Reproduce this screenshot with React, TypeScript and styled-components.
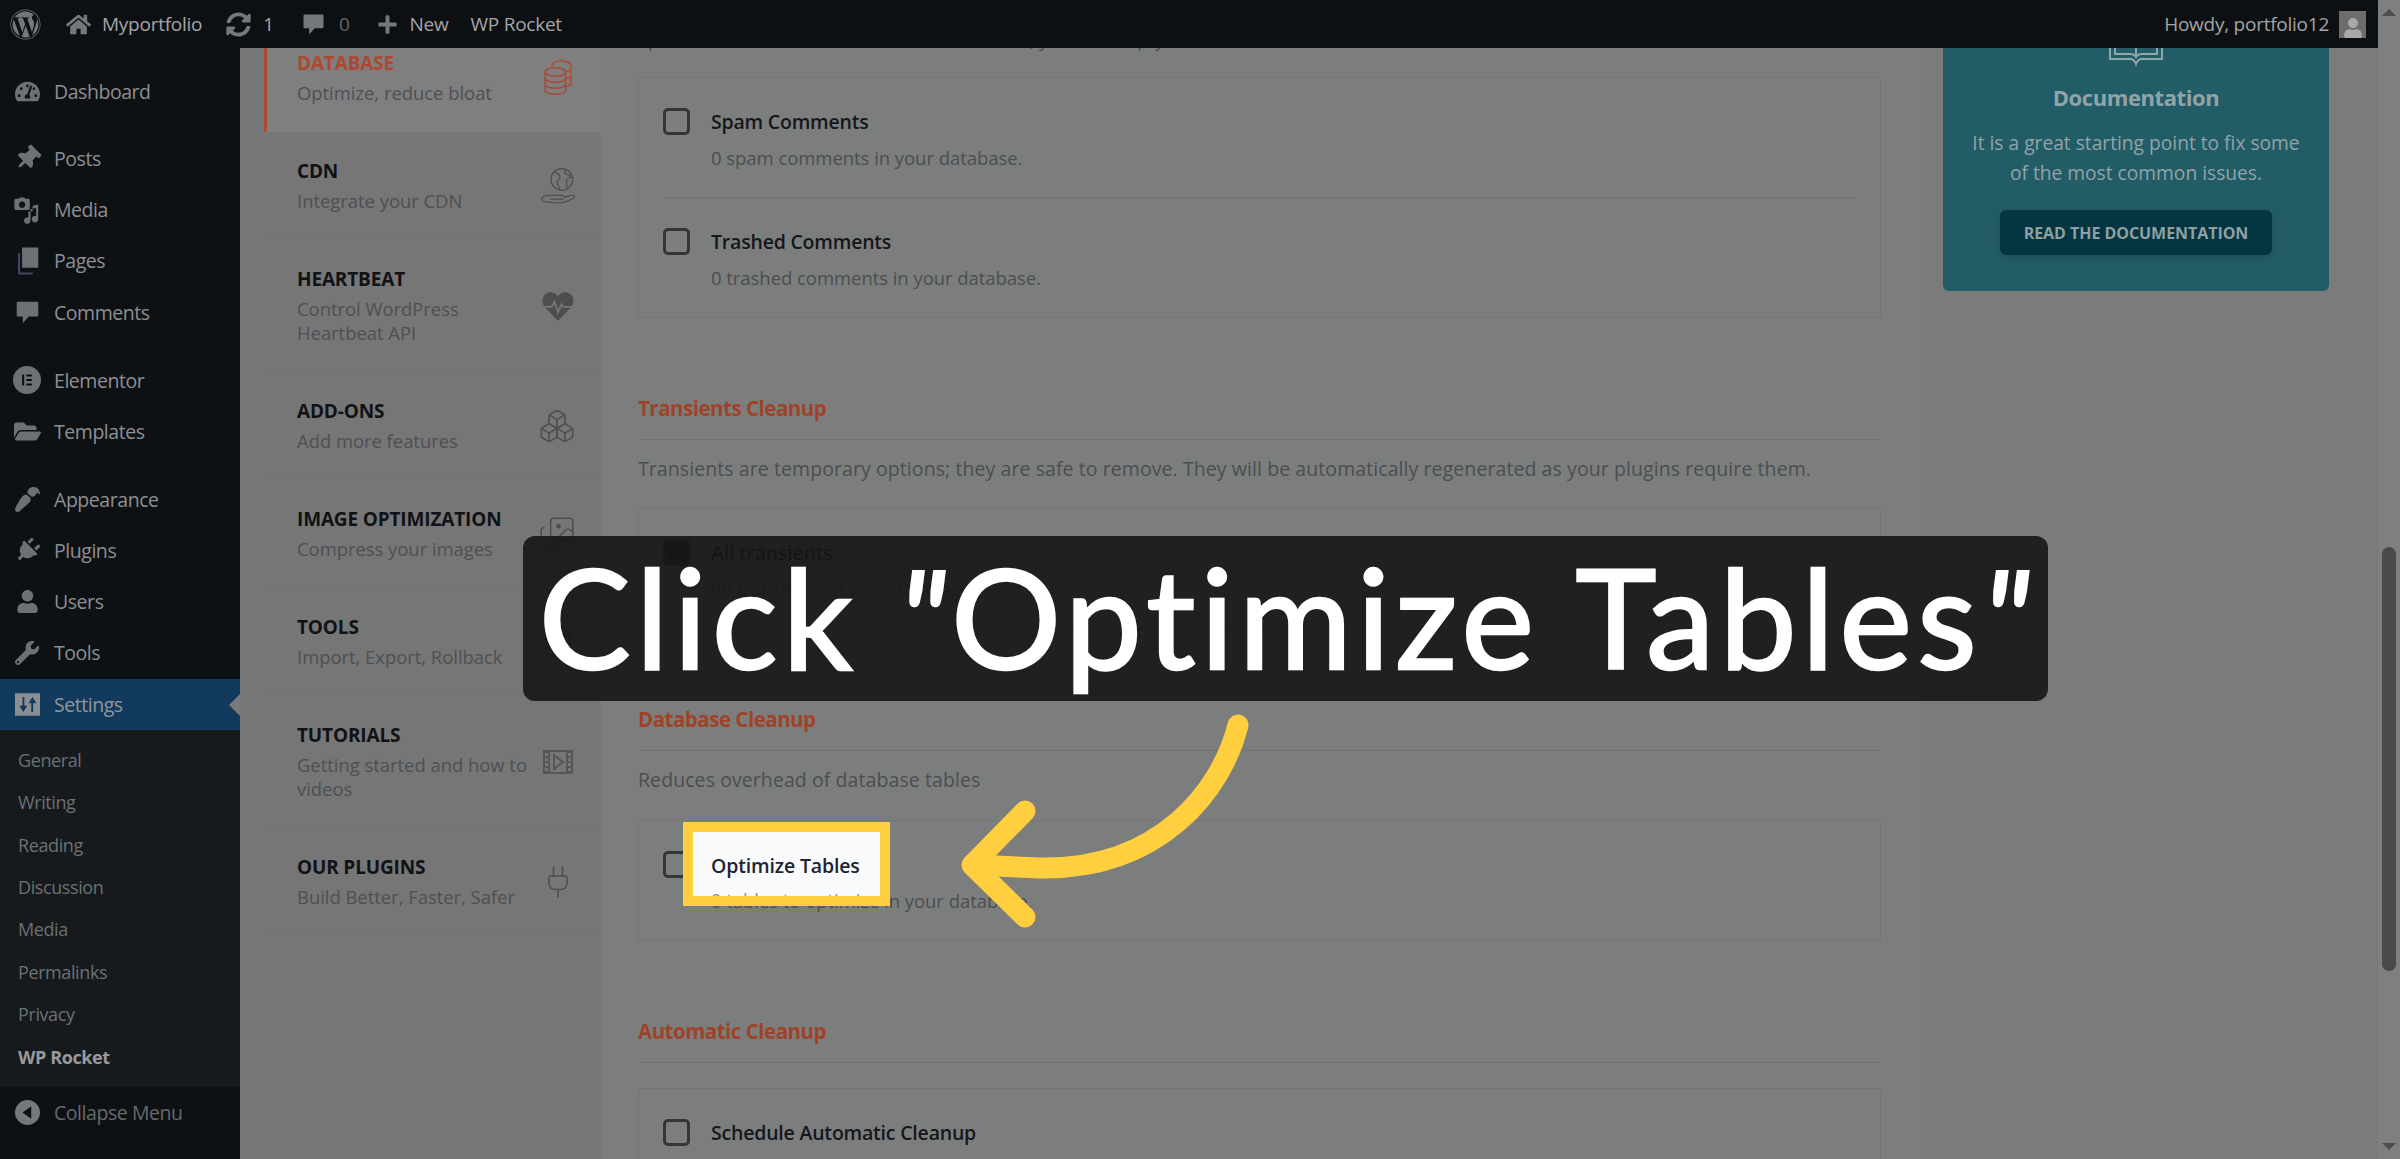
import React from "react";
import styled, { createGlobalStyle } from "styled-components";
import { FaWordpress, FaHome, FaSyncAlt, FaPlus, FaTachometerAlt, FaThumbtack, FaFolderOpen, FaPaintBrush, FaPlug, FaUser, FaWrench } from "react-icons/fa";
import { Boxes, Images, FileCog, Plug } from "lucide-react";

const Global = createGlobalStyle`
  html, body { margin: 0; padding: 0; width: 2400px; height: 1159px; overflow: hidden; background: #7b7b7b; }
  * { box-sizing: border-box; }
  body { font-family: "Open Sans", "Noto Sans", sans-serif; }
`;

const Root = styled.div`
  position: relative; width: 2400px; height: 1159px; display: flex; overflow: hidden;
`;
const PageColumn = styled.div`
  width: 2378px; height: 1159px; display: flex; flex-direction: column; overflow: hidden;
`;
const TopBar = styled.header`
  position: relative; z-index: 2; flex: 0 0 48px; background: #0d1013; display: flex; align-items: center;
  color: #a3a5a7; font-size: 19px; letter-spacing: -0.25px; padding-left: 10px;
`;
const BarItem = styled.span<{ $left: number; $dim?: boolean }>`
  display: inline-flex; align-items: center; margin-left: ${(p) => p.$left}px; color: ${(p) => (p.$dim ? "#62666a" : "#a3a5a7")};
  svg { display: block; color: #74787c; }
`;
const BarRight = styled.div`
  margin-left: auto; margin-right: 12px; display: flex; align-items: center; gap: 10px;
`;
const Avatar = styled.span`
  width: 27px; height: 27px; background: #6d6d6d; display: flex; align-items: flex-end; justify-content: center; overflow: hidden;
  svg { color: #a9a9a9; }
`;
const Body = styled.div`
  flex: 1; display: flex; min-height: 0; overflow: hidden;
`;
const Sidebar = styled.nav`
  flex: 0 0 240px; background: #0e1114; padding-top: 18px; display: flex; flex-direction: column;
`;
const MenuItem = styled.div<{ $gap?: number; $active?: boolean }>`
  height: 51.15px; flex: none; display: flex; align-items: center; position: relative; margin-top: ${(p) => p.$gap ?? 0}px;
  background: ${(p) => (p.$active ? "#123a5c" : "transparent")};
  color: #8d8f93; font-size: 19.5px; letter-spacing: -0.45px;
  ${(p) => p.$active && `
    color: #90959a;
    &::after { content: ""; position: absolute; right: 0; top: 15px; border: 11px solid transparent; border-right-color: #7a7a7a; border-left: 0; }
  `}
`;
const MenuIcon = styled.span<{ $turn?: number }>`
  flex: 0 0 54px; display: flex; align-items: center; justify-content: center; color: #6e7174;
  svg { display: block; transform: rotate(${(p) => p.$turn ?? 0}deg); }
`;
const Submenu = styled.div`
  background: #161a1d; padding: 9px 0 9px 18px; height: 357px; flex: none;
`;
const SubItem = styled.div<{ $strong?: boolean }>`
  height: 42.4px; display: flex; align-items: center; font-size: 18px; letter-spacing: -0.4px;
  color: ${(p) => (p.$strong ? "#979a9c" : "#6c7073")}; font-weight: ${(p) => (p.$strong ? 700 : 400)};
`;
const Collapse = styled(MenuItem)`
  color: #66696c; margin-top: 0;
`;
const RocketNav = styled.aside`
  flex: 0 0 361px; background: #787878; padding-left: 24px; margin-top: -24px; display: flex; flex-direction: column;
`;
const NavEntry = styled.div<{ $active?: boolean; $tall?: boolean }>`
  flex: none; height: ${(p) => (p.$tall ? 132 : 108)}px; display: flex; align-items: center; padding: 0 25px 0 ${(p) => (p.$active ? 30 : 33)}px;
  background: ${(p) => (p.$active ? "#7f7f7f" : "#767676")};
  border-left: ${(p) => (p.$active ? "3px solid #ad4930" : "0")};
  border-bottom: 1px solid ${(p) => (p.$active ? "transparent" : "#727272")};
  gap: 6px;
`;
const NavText = styled.div`
  flex: 1; min-width: 0; margin-top: -3px;
`;
const NavTitle = styled.div<{ $active?: boolean }>`
  font-size: 19px; font-weight: 700; line-height: 30px; margin-bottom: 3px; letter-spacing: -0.15px; color: ${(p) => (p.$active ? "#ad4930" : "#101216")};
`;
const NavDesc = styled.div`
  font-size: 18.4px; line-height: 24px; letter-spacing: 0; color: #4d5054; white-space: pre-line;
`;
const NavIcon = styled.span<{ $active?: boolean }>`
  flex: 0 0 36px; display: flex; justify-content: center; color: ${(p) => (p.$active ? "#ad4930" : "#4c4e50")};
  svg { display: block; }
`;
const Content = styled.main`
  flex: 0 0 1318px; background: #7c7e7d; padding: 0 38px 0 37px; margin-top: -20px;
`;
const Lead = styled.p`
  margin: 0; font-size: 18.5px; line-height: 24px; letter-spacing: -0.1px; color: #4b4e50; white-space: nowrap;
`;
const Heading = styled.h3<{ $top: number }>`
  margin: ${(p) => p.$top}px 0 0; font-size: 20.5px; font-weight: 700; line-height: 30px; letter-spacing: -0.5px; color: #9e4329;
  padding-bottom: 16px; border-bottom: 1px solid #717372;
`;
const SectionDesc = styled.p`
  margin: 17px 0 0; font-size: 19.5px; line-height: 24px; letter-spacing: 0.08px; color: #4b4e50;
`;
const Card = styled.section<{ $top: number }>`
  margin-top: ${(p) => p.$top}px; border: 1px solid #747675; border-radius: 2px; padding: 0 24px;
`;
const Row = styled.div<{ $line?: boolean }>`
  display: flex; gap: 21px; padding: 30px 0 27px; border-bottom: ${(p) => (p.$line ? "1px solid #6f7170" : "0")};
`;
const Box = styled.span<{ $checked?: boolean }>`
  flex: 0 0 27px; width: 27px; height: 27px; border: 3px solid #333536; border-radius: 5px;
  background: ${(p) => (p.$checked ? "#20233a" : "transparent")}; display: flex; align-items: center; justify-content: center;
  svg { display: block; }
`;
const RowTitle = styled.div`
  font-size: 19.5px; font-weight: 600; line-height: 28px; letter-spacing: -0.2px; color: #14171b;
`;
const RowDesc = styled.div`
  margin-top: 10px; font-size: 18.5px; line-height: 24px; letter-spacing: -0.05px; color: #4b4e50;
`;
const RightPanel = styled.aside`
  flex: 1; background: #7b7b7b; padding-left: 24px;
`;
const Help = styled.div`
  width: 386px; height: 283px; margin-top: -40px; background: #225c66; border-radius: 6px; display: flex; flex-direction: column; align-items: center; padding-top: 17px; color: #91a4a7;
`;
const HelpTitle = styled.div`
  margin-top: 14px; font-size: 22px; line-height: 32px; font-weight: 700; letter-spacing: -0.4px;
`;
const HelpText = styled.div`
  margin-top: 15px; font-size: 19.2px; line-height: 30px; text-align: center; letter-spacing: 0; font-weight: 500;
`;
const HelpButton = styled.div`
  margin-top: 22px; width: 272px; height: 45px; border-radius: 6px; background: #033641; display: flex; align-items: center; justify-content: center;
  font-size: 16px; font-weight: 700; letter-spacing: -0.05px; box-shadow: 0 3px 8px rgba(0,0,0,.12); color: #8fa0a3;
`;
const Scrollbar = styled.div`
  flex: 0 0 22px; background: #7f7f7f; display: flex; flex-direction: column; align-items: center; padding: 9px 0 9px;
`;
const ArrowUp = styled.span`
  width: 0; height: 0; border: 7px solid transparent; border-bottom: 7px solid #4d4d4d; border-top: 0;
`;
const ArrowDown = styled(ArrowUp)`
  margin-top: auto; border-bottom: 0; border-top: 7px solid #4d4d4d;
`;
const Thumb = styled.span`
  margin-top: 531px; width: 14px; height: 424px; border-radius: 7px; background: #4a4a4a;
`;
const Banner = styled.div`
  position: absolute; z-index: 5; left: 523px; top: 536px; width: 1525px; height: 165px; border-radius: 12px; padding: 0 0 5px 3px;
  background: rgba(22,22,22,.9); color: #fff; display: flex; align-items: center; justify-content: center;
  font-family: Lato, "Open Sans", sans-serif; font-size: 137px; line-height: 1; letter-spacing: 5.4px; white-space: pre; -webkit-text-stroke: 2.5px #fff;
`;
const Quote = styled.span`
  font-style: italic;
`;
const Highlight = styled.div`
  position: absolute; z-index: 6; left: 683px; top: 822px; width: 207px; height: 84px; border: 10px solid #ffcf3f; background: #f9fafc; overflow: hidden; padding: 20px 0 0 18px;
`;
const HighTitle = styled.div`
  font-size: 19.5px; font-weight: 600; line-height: 28px; letter-spacing: -0.15px; color: #1b2430; white-space: nowrap;
`;
const HighDesc = styled.div`
  margin-top: 8px; font-size: 18.5px; line-height: 24px; letter-spacing: -0.05px; color: #8b8f94; white-space: nowrap;
`;
const ArrowArt = styled.svg`
  position: absolute; z-index: 7; left: 950px; top: 700px;
`;

const Bubble = ({ s }: { s: number }) => (
  <svg width={s} height={s} viewBox="0 0 20 20" fill="currentColor"><path d="M3 2h14a1 1 0 011 1v9a1 1 0 01-1 1h-6l-4.500 5v-5H3a1 1 0 01-1-1V3a1 1 0 011-1z" /></svg>
);
const MediaIcon = () => (
  <svg width="28" height="28" viewBox="0 0 20 20" fill="currentColor"><path fillRule="evenodd" d="M2 2h2l1-1h3l1 1h2a1 1 0 011 1v6a1 1 0 01-1 1H2a1 1 0 01-1-1V3a1 1 0 011-1zm4.500 2a2.200 2.200 0 100 4.400 2.200 2.200 0 000-4.400z" /><path d="M18 6v10.500a2.300 2.300 0 11-1.500-2.100V8.500l-4 1v8a2.300 2.300 0 11-1.500-2.100V11h3V7z" /></svg>
);
const PagesIcon = () => (
  <svg width="27" height="30" viewBox="0 0 20 22" fill="currentColor"><path d="M6 1h12v15H6z" /><path d="M3 5h1.500v14.500H14V21H3z" fill="#55507a" opacity=".8" /></svg>
);
const ElementorIcon = () => (
  <svg width="28" height="28" viewBox="0 0 20 20"><path fill="currentColor" fillRule="evenodd" d="M10 0a10 10 0 100 20 10 10 0 000-20zM6.500 6h1.500v8H6.500zM9.500 6h4v1.500h-4zM9.500 9.200h4v1.500h-4zM9.500 12.500h4V14h-4z" /></svg>
);
const SettingsIcon = () => (
  <svg width="25" height="25" viewBox="0 0 20 20"><path fill="#8a8f94" fillRule="evenodd" d="M0 1h20v18H0zM6 4v7H3.500l3.200 5 3.200-5H7.500V4zM13 16v-7h-2.200l3.200-5 3.200 5H14.500v7z" /></svg>
);
const CollapseIcon = () => (
  <svg width="25" height="25" viewBox="0 0 20 20"><path fill="#75797c" fillRule="evenodd" d="M10 0a10 10 0 100 20 10 10 0 000-20zM13 5v10L6 10z" /></svg>
);
const StackIcon = () => (
  <svg width="30" height="36" viewBox="0 0 32 42" fill="none" stroke="currentColor" strokeWidth="1.700">
    <ellipse cx="13" cy="14" rx="12" ry="5" />
    <path d="M1 14v21c0 3 5.500 5 12 5s12-2 12-5V14M1 21c0 3 5.500 5 12 5s12-2 12-5M1 28c0 3 5.500 5 12 5s12-2 12-5" />
    <path d="M9 7c0-3 4-6 10-6s12 2 12 5v21c0 2-2.500 3.500-6 4M25 13c3 0 6-1 6-3M25 21c3 0 6-1 6-3" />
  </svg>
);
const CdnIcon = () => (
  <svg width="34" height="38" viewBox="0 0 36 40" fill="none" stroke="currentColor" strokeWidth="1.300">
    <circle cx="22" cy="13" r="11.500" />
    <path d="M14 5c3 1 6 3 6 6s-4 2-3 6 3 5 3 7M26 3c-2 3 0 5 3 5l3 3c-3 0-5 1-5 4s1 4 0 7" />
    <path d="M1 34c0-3 5-4 9-4h12c2 0 3 1 3 2 4-1 8-3 10-2 1 1 0 3-3 4-5 3-10 4-15 4-4 0-7-1-10-1-3 0-6-1-6-3zM10 34h14" />
  </svg>
);
const HeartIcon = () => (
  <svg width="36" height="32" viewBox="0 0 36 36"><path fill="currentColor" d="M18 35L3 19C-1 14 0 5 7 3c4-1 8 0 11 4 3-4 7-5 11-4 7 2 8 11 4 16z" /><path fill="none" stroke="#767676" strokeWidth="2" d="M1 19h10l3-6 4 12 4-9 2 3h11" /></svg>
);
const FilmIcon = () => (
  <svg width="30" height="24" viewBox="0 0 30 24"><path fill="#555759" d="M0 0h30v24H0z" /><path fill="#767676" d="M7 2h16v20H7zM2 3h3v3H2zM2 8h3v3H2zM2 13h3v3H2zM2 18h3v3H2zM25 3h3v3h-3zM25 8h3v3h-3zM25 13h3v3h-3zM25 18h3v3h-3z" /><path fill="none" stroke="#555759" strokeWidth="2" d="M11 5l9 7-9 7z" /></svg>
);
const BookIcon = () => (
  <svg width="56" height="42" viewBox="0 0 56 42" fill="none" stroke="#91a4a7" strokeWidth="2"><path d="M2 4v30h20c3 0 5 2 6 5 1-3 3-5 6-5h20V4M7 2v27h15c3 0 5 1 6 3 1-2 3-3 6-3h15V2M28 4v28" /></svg>
);

const nav = [
  { t: "DATABASE", d: "Optimize, reduce bloat", i: <StackIcon />, active: true },
  { t: "CDN", d: "Integrate your CDN", i: <CdnIcon /> },
  { t: "HEARTBEAT", d: "Control WordPress\nHeartbeat API", i: <HeartIcon />, tall: true },
  { t: "ADD-ONS", d: "Add more features", i: <Boxes size={38} strokeWidth={1} /> },
  { t: "IMAGE OPTIMIZATION", d: "Compress your images", i: <Images size={38} strokeWidth={1} /> },
  { t: "TOOLS", d: "Import, Export, Rollback", i: <FileCog size={36} strokeWidth={1} /> },
  { t: "TUTORIALS", d: "Getting started and how to\nvideos", i: <FilmIcon />, tall: true },
  { t: "OUR PLUGINS", d: "Build Better, Faster, Safer", i: <Plug size={36} strokeWidth={1} /> },
];
const subs = ["General", "Writing", "Reading", "Discussion", "Media", "Permalinks", "Privacy"];

const Option = ({ title, desc, line, checked }: { title: string; desc: string; line?: boolean; checked?: boolean }) => (
  <Row $line={line}>
    <Box $checked={checked}>
      {checked && <svg width="18" height="18" viewBox="0 0 18 18" fill="none" stroke="#141414" strokeWidth="2.500"><path d="M3 10l4 4 8-11" /></svg>}
    </Box>
    <div>
      <RowTitle>{title}</RowTitle>
      <RowDesc>{desc}</RowDesc>
    </div>
  </Row>
);

export default function App() {
  return (
    <Root>
      <Global />
      <PageColumn>
        <TopBar>
          <BarItem $left={0}><FaWordpress size={31} /></BarItem>
          <BarItem $left={25}><FaHome size={25} /></BarItem>
          <BarItem $left={11}>Myportfolio</BarItem>
          <BarItem $left={24}><FaSyncAlt size={25} /></BarItem>
          <BarItem $left={12}>1</BarItem>
          <BarItem $left={27}><Bubble s={25} /></BarItem>
          <BarItem $left={13} $dim>0</BarItem>
          <BarItem $left={27}><FaPlus size={21} /></BarItem>
          <BarItem $left={12}>New</BarItem>
          <BarItem $left={22}>WP Rocket</BarItem>
          <BarRight>
            <span>Howdy, portfolio12</span>
            <Avatar><FaUser size={20} /></Avatar>
          </BarRight>
        </TopBar>
        <Body>
          <Sidebar>
            <MenuItem><MenuIcon><FaTachometerAlt size={25} /></MenuIcon>Dashboard</MenuItem>
            <MenuItem $gap={16}><MenuIcon $turn={45}><FaThumbtack size={25} /></MenuIcon>Posts</MenuItem>
            <MenuItem><MenuIcon><MediaIcon /></MenuIcon>Media</MenuItem>
            <MenuItem><MenuIcon><PagesIcon /></MenuIcon>Pages</MenuItem>
            <MenuItem><MenuIcon><Bubble s={27} /></MenuIcon>Comments</MenuItem>
            <MenuItem $gap={17}><MenuIcon><ElementorIcon /></MenuIcon>Elementor</MenuItem>
            <MenuItem><MenuIcon><FaFolderOpen size={27} /></MenuIcon>Templates</MenuItem>
            <MenuItem $gap={17}><MenuIcon $turn={180}><FaPaintBrush size={25} /></MenuIcon>Appearance</MenuItem>
            <MenuItem><MenuIcon $turn={45}><FaPlug size={25} /></MenuIcon>Plugins</MenuItem>
            <MenuItem><MenuIcon><FaUser size={23} /></MenuIcon>Users</MenuItem>
            <MenuItem><MenuIcon><FaWrench size={24} /></MenuIcon>Tools</MenuItem>
            <MenuItem $active><MenuIcon><SettingsIcon /></MenuIcon>Settings</MenuItem>
            <Submenu>
              {subs.map((s) => <SubItem key={s}>{s}</SubItem>)}
              <SubItem $strong>WP Rocket</SubItem>
            </Submenu>
            <Collapse><MenuIcon><CollapseIcon /></MenuIcon>Collapse Menu</Collapse>
          </Sidebar>
          <RocketNav>
            {nav.map((n) => (
              <NavEntry key={n.t} $active={n.active} $tall={n.tall}>
                <NavText>
                  <NavTitle $active={n.active}>{n.t}</NavTitle>
                  <NavDesc>{n.d}</NavDesc>
                </NavText>
                <NavIcon $active={n.active}>{n.i}</NavIcon>
              </NavEntry>
            ))}
          </RocketNav>
          <Content>
            <Lead>Spam and trashed comments will be removed, you can empty them.</Lead>
            <Card $top={25}>
              <Option title="Spam Comments" desc="0 spam comments in your database." line />
              <Option title="Trashed Comments" desc="0 trashed comments in your database." />
            </Card>
            <Heading $top={75}>Transients Cleanup</Heading>
            <SectionDesc>Transients are temporary options; they are safe to remove. They will be automatically regenerated as your plugins require them.</SectionDesc>
            <Card $top={27}>
              <Option title="All transients" desc="90 transients in your database." checked />
            </Card>
            <Heading $top={75}>Database Cleanup</Heading>
            <SectionDesc>Reduces overhead of database tables</SectionDesc>
            <Card $top={28}>
              <Option title="Optimize Tables" desc="0 tables to optimize in your database." />
            </Card>
            <Heading $top={75}>Automatic Cleanup</Heading>
            <Card $top={25}>
              <Option title="Schedule Automatic Cleanup" desc="" />
            </Card>
          </Content>
          <RightPanel>
            <Help>
              <BookIcon />
              <HelpTitle>Documentation</HelpTitle>
              <HelpText>It is a great starting point to fix some<br />of the most common issues.</HelpText>
              <HelpButton>READ THE DOCUMENTATION</HelpButton>
            </Help>
          </RightPanel>
        </Body>
      </PageColumn>
      <Scrollbar>
        <ArrowUp />
        <Thumb />
        <ArrowDown />
      </Scrollbar>
      <Banner>Click <Quote>"</Quote>Optimize Tables<Quote>"</Quote></Banner>
      <Highlight>
        <HighTitle>Optimize Tables</HighTitle>
        <HighDesc>0 tables to optimize in your database.</HighDesc>
      </Highlight>
      <ArrowArt width="300" height="240" viewBox="950 700 300 240" fill="none" stroke="#ffcf3f" strokeWidth="21" strokeLinecap="round" strokeLinejoin="round">
        <path d="M1238 725C1222 790 1160 870 1040 868L975 865" />
        <path d="M1025 811L972 865L1025 917" />
      </ArrowArt>
    </Root>
  );
}
